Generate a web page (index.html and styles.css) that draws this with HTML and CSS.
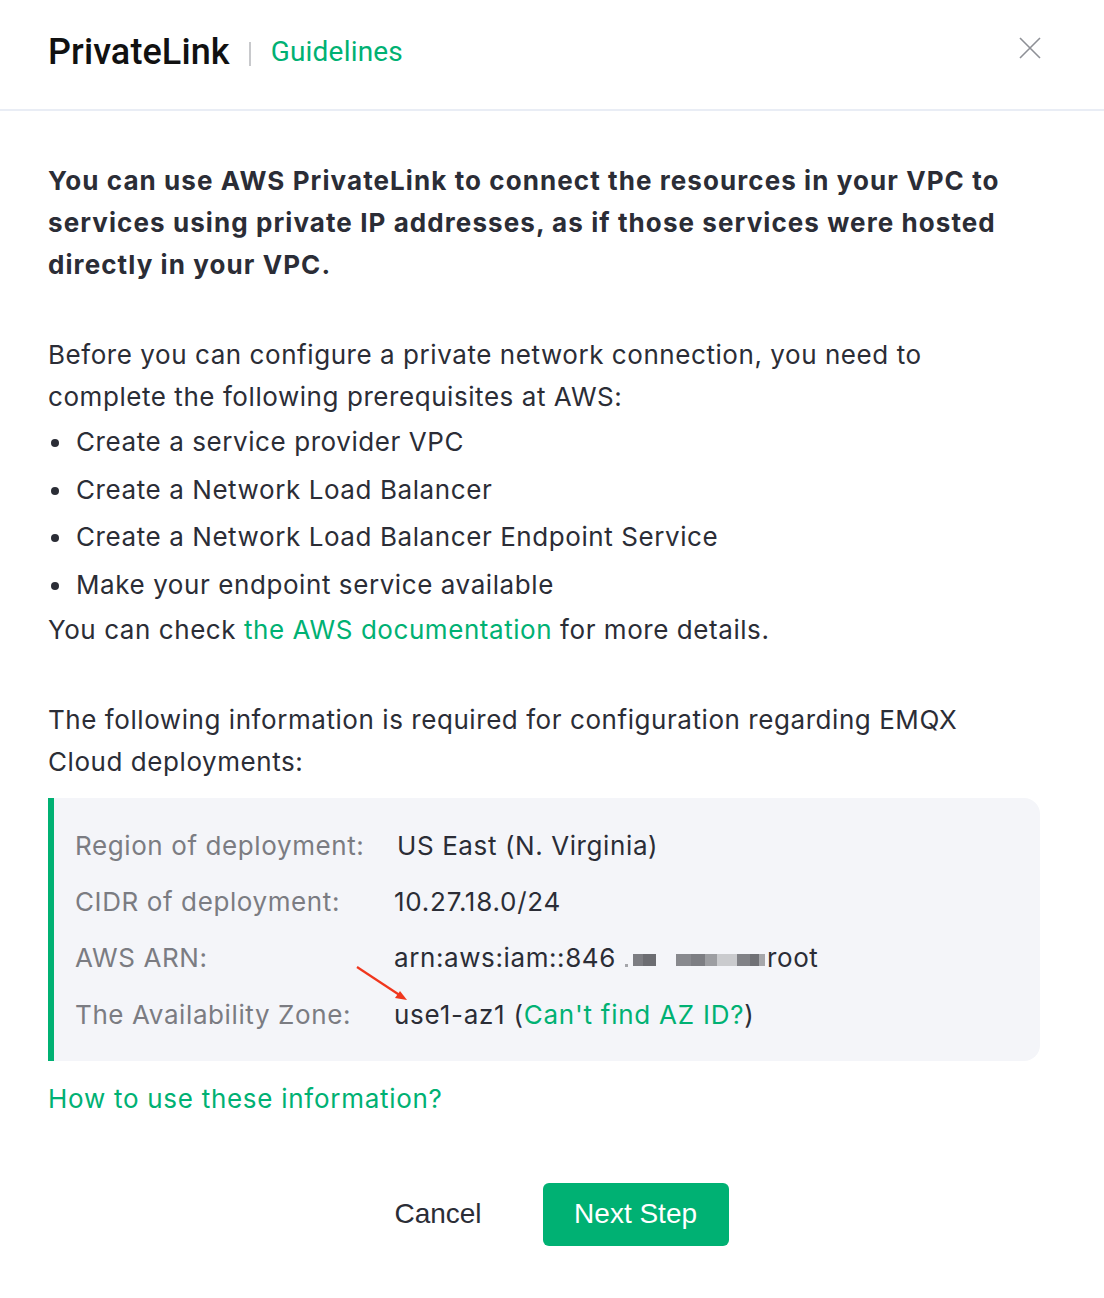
FILE: index.html
```html
<!DOCTYPE html>
<html>
<head>
<meta charset="utf-8">
<link rel="stylesheet" href="styles.css">
</head>
<body>
<div class="dialog">
  <header class="header">
    <div class="title">
      <span class="title-main">PrivateLink</span>
      <span class="title-sep"></span>
      <a class="title-link">Guidelines</a>
    </div>
    <svg class="close" width="22" height="22" viewBox="0 0 22 22"><path d="M1 1L21 21M21 1L1 21" stroke="#8e9096" stroke-width="1.6" fill="none"/></svg>
  </header>
  <main class="content">
    <p class="lead">You can use AWS PrivateLink to connect the resources in your VPC to services using private IP addresses, as if those services were hosted directly in your VPC.</p>
    <div class="section">
      <p class="text">Before you can configure a private network connection, you need to complete the following prerequisites at AWS:</p>
      <ul class="list">
        <li>Create a service provider VPC</li>
        <li>Create a Network Load Balancer</li>
        <li>Create a Network Load Balancer Endpoint Service</li>
        <li>Make your endpoint service available</li>
      </ul>
      <p class="text">You can check <a class="link">the AWS documentation</a> for more details.</p>
    </div>
    <p class="text section">The following information is required for configuration regarding EMQX Cloud deployments:</p>
    <div class="info">
      <div class="row"><span class="label">Region of deployment:</span><span class="value first">US East (N. Virginia)</span></div>
      <div class="row"><span class="label">CIDR of deployment:</span><span class="value">10.27.18.0/24</span></div>
      <div class="row"><span class="label">AWS ARN:</span><span class="value arn">arn:aws:iam::846<span class="dot"></span><span class="mosaic"><i class="c1"></i><i class="c2"></i></span><span class="mosaic gap"><i class="c3"></i><i class="c4"></i><i class="c5"></i><i class="c6"></i><i class="c7"></i><i class="c8"></i><i class="c9"></i></span>root</span></div>
      <div class="row"><span class="label">The Availability Zone:</span><span class="value">use1-az1 (<a class="link">Can't find AZ ID?</a>)</span></div>
      <svg class="arrow" width="56" height="40" viewBox="0 0 56 40"><path d="M2 2L46 31" stroke="#f0361d" stroke-width="2.2" fill="none"/><path d="M52 35L40 33L45 26Z" fill="#f0361d"/></svg>
    </div>
    <a class="link how">How to use these information?</a>
  </main>
  <footer class="footer">
    <button class="btn-cancel">Cancel</button>
    <button class="btn-next">Next Step</button>
  </footer>
</div>
</body>
</html>
```
FILE: styles.css
```css
* { box-sizing: border-box; }
html, body { margin: 0; padding: 0; background: #fff; }
body { font-family: "Inter", "Noto Sans", sans-serif; color: #2b2d36; }
.dialog { width: 1104px; height: 1298px; position: relative; }
.header {
  height: 111px;
  border-bottom: 2px solid #e9edf5;
  display: flex;
  align-items: center;
  justify-content: space-between;
  padding: 0 64px 6px 48px;
}
.title { display: flex; align-items: center; }
.title-main { font-family: "Roboto", "Liberation Sans", sans-serif; font-weight: 500; font-size: 36px; color: #111; letter-spacing: 0.1px; }
.title-sep { width: 2px; height: 24px; background: #c8c9cc; margin: 4px 20px 0 19px; }
.title-link { font-family: "Roboto", "Liberation Sans", sans-serif; font-size: 28px; color: #00b173; letter-spacing: 0.2px; }
.close { margin-top: -8px; margin-right: -1px; }
.content { padding: 49px 64px 0 48px; }
p { margin: 0; }
.lead { font-size: 26px; font-weight: 700; line-height: 42px; color: #2b2d36; letter-spacing: 1.08px; }
.section { margin-top: 48px; }
.text { font-size: 26px; line-height: 42px; letter-spacing: 0.56px; }
.list { list-style: none; margin: 0; padding: 0; }
.list li { font-size: 26px; line-height: 47.7px; position: relative; padding-left: 28px; letter-spacing: 0.58px; }
.list li::before { content: ""; position: absolute; left: 3px; top: 21px; width: 8px; height: 8px; border-radius: 50%; background: #2b2d36; }
.link { color: #00b173; text-decoration: none; }
.info {
  position: relative;
  margin-top: 15px;
  background: #f4f5f9;
  border-left: 6px solid #00b173;
  border-radius: 0 16px 16px 0;
  padding: 27px 20px 25px 21px;
  display: flex;
  flex-direction: column;
  gap: 14.3px;
}
.row { display: flex; font-size: 26px; line-height: 42px; letter-spacing: 0.6px; }
.label { width: 319px; color: #7b7c82; flex: none; }
.value { color: #2b2d36; display: flex; align-items: center; letter-spacing: 0.75px; }
.value.first { margin-left: 3px; letter-spacing: 0.6px; }
.value.arn { letter-spacing: 0.6px; }
.dot { display: inline-block; width: 3px; height: 3px; background: #a4a5aa; margin: 15px 0 0 9px; }
.mosaic { display: inline-flex; height: 12px; margin-top: 3px; margin-left: 5px; }
.mosaic.gap { margin-left: 20px; margin-right: 2px; }
.mosaic i { display: block; height: 100%; }
.c1 { width: 10px; background: #7c7d82; }
.c2 { width: 13px; background: #6c6d72; }
.c3 { width: 15px; background: #88898e; }
.c4 { width: 14px; background: #7d7e83; }
.c5 { width: 12px; background: #9d9ea2; }
.c6 { width: 20px; background: #cacbce; }
.c7 { width: 13px; background: #818287; }
.c8 { width: 9px; background: #707176; }
.c9 { width: 6px; background: #a6a7ab; }
.arrow { position: absolute; left: 301px; top: 167px; }
.how { display: block; margin-top: 17px; font-size: 26px; line-height: 42px; letter-spacing: 0.72px; }
.footer {
  margin-top: 63px;
  display: flex;
  justify-content: center;
  align-items: center;
  gap: 61px;
  padding-left: 19px;
}
button { font-family: "Liberation Sans", Arial, sans-serif; font-size: 28px; border: none; cursor: pointer; }
.btn-cancel { background: none; color: #2b2d36; padding: 0; }
.btn-next { background: #00b173; color: #fff; width: 186px; height: 63px; border-radius: 6px; }
```
